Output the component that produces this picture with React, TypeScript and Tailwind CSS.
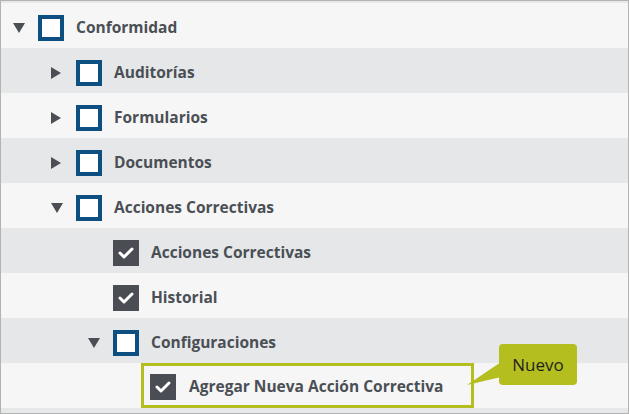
import React from 'react';

type Row = { label: string; level: number; arrow?: 'down' | 'right'; checked?: boolean; highlight?: boolean };

const rows: Row[] = [
  { label: 'Conformidad', level: 0, arrow: 'down' },
  { label: 'Auditorías', level: 1, arrow: 'right' },
  { label: 'Formularios', level: 1, arrow: 'right' },
  { label: 'Documentos', level: 1, arrow: 'right' },
  { label: 'Acciones Correctivas', level: 1, arrow: 'down' },
  { label: 'Acciones Correctivas', level: 2, checked: true },
  { label: 'Historial', level: 2, checked: true },
  { label: 'Configuraciones', level: 2, arrow: 'down' },
  { label: 'Agregar Nueva Acción Correctiva', level: 3, checked: true, highlight: true },
];

const indent = ['pl-[12px]', 'pl-[50px]', 'pl-[87px]', 'pl-[124px]'];

function Arrow({ dir }: { dir?: 'down' | 'right' }) {
  if (!dir) return <span className="w-[25px] shrink-0" />;
  return (
    <span className="w-[25px] shrink-0 flex items-center">
      {dir === 'down' ? (
        <svg width="12" height="10" viewBox="0 0 12 10"><polygon points="0,0 12,0 6,10" fill="#4b4f55" /></svg>
      ) : (
        <svg width="10" height="12" viewBox="0 0 10 12"><polygon points="0,0 10,6 0,12" fill="#4b4f55" /></svg>
      )}
    </span>
  );
}

function Box({ checked }: { checked?: boolean }) {
  if (checked) {
    return (
      <span className="w-[26px] h-[26px] shrink-0 bg-[#4a4e54] flex items-center justify-center">
        <svg width="16" height="13" viewBox="0 0 16 13">
          <polyline points="2,7 6,11 14,3" fill="none" stroke="#fff" strokeWidth="3" strokeLinecap="round" strokeLinejoin="round" />
        </svg>
      </span>
    );
  }
  return <span className="w-[26px] h-[26px] shrink-0 border-[4px] border-[#0c4f80] bg-white" />;
}

export default function App() {
  return (
    <div className="relative w-[629px] h-[414px] border border-[#b3b3b3] bg-[#e6e7e9] pt-[2px] overflow-hidden" style={{ fontFamily: '"Open Sans", "Liberation Sans", sans-serif' }}>
      {rows.map((r, i) => (
        <div key={i} className={`h-[45px] flex items-center ${indent[r.level]} ${r.highlight ? '' : 'pt-[4px]'} ${i % 2 === 0 ? 'bg-[#f6f6f6]' : 'bg-[#e6e7e9]'}`}>
          {r.highlight ? (
            <div className="ml-[16px] w-[333px] h-[45px] border-[3px] border-[#b4bf1f] flex items-center gap-[13px] pl-[6px] pt-[2px]">
              <Box checked={r.checked} />
              <span className="text-[15.5px] font-bold text-[#4a4f55]">{r.label}</span>
            </div>
          ) : (
            <>
              <Arrow dir={r.arrow} />
              <span className="flex items-center gap-[12px]">
                <Box checked={r.checked} />
                <span className="text-[15.5px] font-bold text-[#4a4f55]">{r.label}</span>
              </span>
            </>
          )}
        </div>
      ))}
      <div className="absolute left-[498px] top-[343px] w-[78px] h-[41px] rounded-[4px] bg-[#b4bf1f] flex items-center justify-center text-[17px] text-[#1f1f1f]">
        Nuevo
      </div>
      <svg className="absolute left-[465px] top-[358px]" width="36" height="28" viewBox="0 0 36 28">
        <polygon points="35,3 1,26 35,18" fill="#b4bf1f" />
      </svg>
    </div>
  );
}
